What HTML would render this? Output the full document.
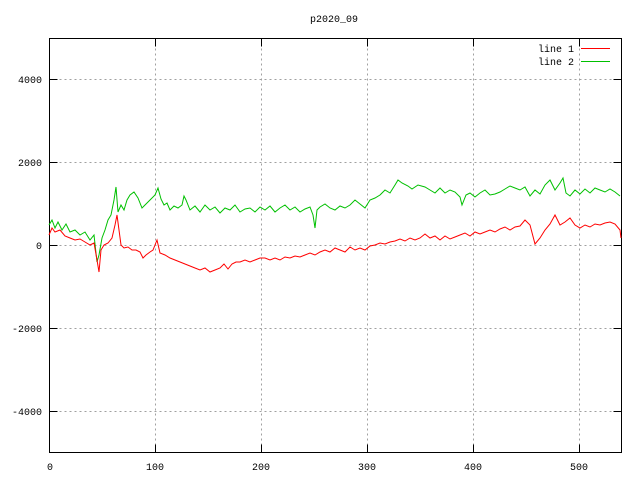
<!DOCTYPE html>
<html><head><meta charset="utf-8"><style>
html,body{margin:0;padding:0;background:#fff}
svg{display:block}
text{font-family:"Liberation Mono",monospace;font-size:10px;fill:#000}
</style></head><body>
<svg width="640" height="480" viewBox="0 0 640 480" xmlns="http://www.w3.org/2000/svg">
<rect width="640" height="480" fill="#fff"/>
<g stroke="#a0a0a0" stroke-width="1" stroke-dasharray="2,3" fill="none">
<path d="M49.5 79.5H621.5M49.5 162.5H621.5M49.5 245.5H621.5M49.5 328.5H621.5M49.5 411.5H621.5"/>
<path d="M155.5 38.5V452.5M261.5 38.5V452.5M367.5 38.5V452.5M473.5 38.5V452.5M579.5 38.5V452.5"/>
</g>
<rect x="49.5" y="38.5" width="572" height="414" fill="none" stroke="#000"/>
<g stroke="#000">
<path d="M49.5 79.5h8M49.5 162.5h8M49.5 245.5h8M49.5 328.5h8M49.5 411.5h8M621.5 79.5h-8M621.5 162.5h-8M621.5 245.5h-8M621.5 328.5h-8M621.5 411.5h-8"/>
<path d="M49.5 452.5v-8M155.5 452.5v-8M261.5 452.5v-8M367.5 452.5v-8M473.5 452.5v-8M579.5 452.5v-8M49.5 38.5v8M155.5 38.5v8M261.5 38.5v8M367.5 38.5v8M473.5 38.5v8M579.5 38.5v8"/>
</g>
<g text-anchor="end">
<text x="42" y="83">4000</text><text x="42" y="166">2000</text><text x="42" y="249">0</text>
<text x="42" y="332">-2000</text><text x="42" y="415">-4000</text>
</g>
<g text-anchor="middle">
<text x="50" y="470">0</text><text x="155" y="470">100</text><text x="261" y="470">200</text>
<text x="367" y="470">300</text><text x="473" y="470">400</text><text x="579" y="470">500</text>
<text x="334" y="22">p2020_09</text>
</g>
<text x="574" y="52" text-anchor="end">line 1</text>
<text x="574" y="65" text-anchor="end">line 2</text>
<path d="M581 48.5h29" stroke="#ff0000"/>
<path d="M581 61.5h29" stroke="#00c000"/>
<polyline fill="none" stroke="#00c000" stroke-width="1" points="49,225 52,220 55,228 58,222 62,230 66,224 70,232 75,230 80,235 85,232 90,240 94,235 97,262 99,255 102,238 105,230 108,220 111,215 114,200 116,187 118,212 121,205 124,210 127,200 130,195 134,192 138,198 142,208 145,205 150,200 155,195 158,188 161,199 164,205 167,203 170,210 174,206 178,208 182,205 184,196 186,200 190,210 195,206 200,212 205,205 210,210 215,207 220,213 225,208 230,210 235,205 240,212 245,209 250,208 255,212 260,207 265,210 270,206 275,212 280,208 285,205 290,210 295,207 300,212 305,209 310,207 313,215 315,228 317,210 320,207 325,204 330,208 335,210 340,206 345,208 350,205 355,200 360,204 365,208 370,200 375,198 380,195 385,190 390,193 395,185 398,180 402,183 408,186 412,189 418,185 425,187 430,190 435,193 440,188 445,193 450,190 455,192 460,197 462,205 466,195 470,193 475,197 480,193 485,190 490,195 495,194 500,192 505,189 510,186 515,188 520,190 525,187 530,196 535,190 540,194 545,185 550,180 555,190 560,183 563,178 566,193 570,196 575,190 580,194 585,189 590,193 595,188 600,190 605,192 610,189 615,192 620,196"/>
<polyline fill="none" stroke="#ff0000" stroke-width="1" points="49,235 52,228 55,232 60,230 65,236 70,238 75,240 80,239 85,242 90,245 94,243 97,260 99,272 101,250 104,245 108,243 112,238 115,225 117,215 119,230 121,245 124,248 128,247 132,250 136,250 140,252 143,258 146,255 150,252 153,250 157,240 160,253 165,255 170,258 175,260 180,262 185,264 190,266 195,268 200,270 205,268 210,272 215,270 220,268 224,264 228,269 232,264 236,262 240,262 245,260 250,262 255,260 260,258 265,258 270,260 275,258 280,260 285,257 290,258 295,256 300,257 305,255 310,253 315,255 320,252 325,250 330,252 335,248 340,250 345,252 350,247 355,250 360,248 365,250 370,246 375,245 380,243 385,244 390,242 395,241 400,239 405,241 410,238 415,240 420,238 425,234 430,238 435,236 440,240 445,236 450,239 455,237 460,235 465,233 470,236 475,232 480,234 485,232 490,230 495,232 500,229 505,227 510,230 515,227 520,226 525,220 530,225 535,244 540,238 545,230 550,224 555,215 560,225 565,222 570,218 575,225 580,228 585,225 590,227 595,224 600,225 605,223 610,222 615,224 620,230 621,238"/>
</svg>
</body></html>
